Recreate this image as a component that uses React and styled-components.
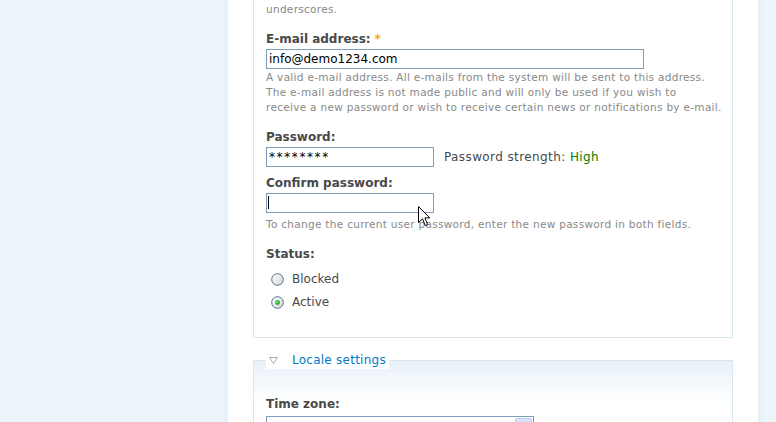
import React from 'react';
import styled, { createGlobalStyle } from 'styled-components';

const GlobalStyle = createGlobalStyle`
  html, body {
    margin: 0;
    padding: 0;
    height: 100%;
  }
  body {
    background: #edf5fa;
    font: 12px/17px "DejaVu Sans", Verdana, sans-serif;
    color: #494949;
    overflow: hidden;
  }
`;

const Page = styled.div`
  position: relative;
  display: flex;
  height: 422px;
  overflow: hidden;
`;

const Gutter = styled.div`
  flex: ${(p) => (p.$side === 'left' ? '0 0 228px' : '1 1 auto')};
  background: ${(p) =>
    p.$side === 'left'
      ? 'linear-gradient(to right, #edf5fa 0, #edf5fa 221px, #e3eef6 228px)'
      : 'linear-gradient(to right, #e3eef6 0, #edf5fa 6px)'};
`;

const Content = styled.main`
  flex: 0 0 530px;
  width: 530px;
  min-width: 0;
  box-sizing: border-box;
  padding: 0 25px;
  background: #fff;
`;

const Fieldset = styled.fieldset`
  box-sizing: border-box;
  width: 480px;
  min-width: 0;
  margin: ${(p) => (p.$cut ? '-30px 0 0' : '14px 0 0')};
  padding: ${(p) => (p.$cut ? '31px 12px 23px' : '27px 12px 20px')};
  border: 1px solid #d8e6ef;
  background: ${(p) => (p.$cut ? '#fff' : 'linear-gradient(#e8f1f9, #fff 42px)')};
`;

const Legend = styled.legend`
  display: flex;
  align-items: center;
  gap: 14px;
  padding: 0 3px 0 3px;
  background: #fff;
  line-height: 17px;
`;

const LegendLink = styled.a`
  color: #027ac6;
  text-decoration: none;
  letter-spacing: 0.25px;
  cursor: pointer;
`;

const Item = styled.div`
  margin-top: ${(p) => p.$gap ?? 14}px;
`;

const Label = styled.label`
  display: block;
  font-weight: bold;
  line-height: 17px;
`;

const Required = styled.span`
  color: #f7a800;
  margin-left: 4px;
`;

const Description = styled.div`
  margin-top: ${(p) => p.$gap ?? 0}px;
  font-size: 10.5px;
  letter-spacing: 0.3px;
  line-height: 15px;
  white-space: nowrap;
  color: #898989;
`;

const FieldRow = styled.div`
  display: flex;
  align-items: center;
  gap: 10px;
  margin-top: 1px;
`;

const InputWrap = styled.div`
  position: relative;
  margin-top: 1px;
  width: ${(p) => p.$width}px;
`;

const TextInput = styled.input`
  display: block;
  box-sizing: border-box;
  width: ${(p) => p.$width}px;
  height: 20px;
  margin: ${(p) => (p.$flush ? '0' : '1px 0 0')};
  padding: 0 2px;
  border: 1px solid #7f9db9;
  background: #fff;
  font: 12px/18px "DejaVu Sans", Verdana, sans-serif;
  letter-spacing: ${(p) => (p.$masked ? '1.6px' : '0')};
  color: #000;
  outline: none;
`;

const Caret = styled.span`
  position: absolute;
  left: 2px;
  top: 3px;
  width: 1px;
  height: 13px;
  background: #000;
`;

const Strength = styled.span`
  color: #494949;
  letter-spacing: 0.4px;
`;

const StrengthLevel = styled.span`
  color: #008000;
`;

const RadioList = styled.div`
  margin-top: 5px;
`;

const RadioRow = styled.label`
  display: flex;
  align-items: center;
  gap: 8px;
  height: 23px;
  padding-left: 5px;
`;

const SelectBox = styled.div`
  display: flex;
  justify-content: flex-end;
  box-sizing: border-box;
  width: 268px;
  height: 20px;
  margin-top: 3px;
  padding: 1px;
  border: 1px solid #7f9db9;
  background: #fff;
`;

const SelectButton = styled.span`
  flex: 0 0 15px;
  border-radius: 2px;
  border: 1px solid #b9cbf3;
  background: linear-gradient(#dbe6fd, #bccff9);
`;

const Pointer = styled.svg`
  position: absolute;
  left: 418px;
  top: 206px;
  pointer-events: none;
`;

function Radio({ checked }) {
  return (
    <svg width="13" height="13" viewBox="0 0 13 13">
      <defs>
        <linearGradient id="radioFill" x1="0" y1="0" x2="1" y2="1">
          <stop offset="0" stopColor="#ffffff" />
          <stop offset="1" stopColor="#d4d4cc" />
        </linearGradient>
        <radialGradient id="radioDot" cx="0.4" cy="0.4" r="0.6">
          <stop offset="0" stopColor="#7be07b" />
          <stop offset="1" stopColor="#1c9a1c" />
        </radialGradient>
      </defs>
      <circle cx="6.5" cy="6.5" r="5.8" fill="url(#radioFill)" stroke="#4d6f93" strokeWidth="1" />
      {checked && <circle cx="6.5" cy="6.5" r="2.4" fill="url(#radioDot)" />}
    </svg>
  );
}

function CollapseArrow() {
  return (
    <svg width="9" height="7" viewBox="0 0 9 7">
      <polygon points="0.5,0.5 8.5,0.5 4.5,6.5" fill="#fff" stroke="#a7a7a7" strokeWidth="1" />
    </svg>
  );
}

export default function App() {
  return (
    <>
      <GlobalStyle />
      <Page>
        <Gutter $side="left" />
        <Content>
          <Fieldset $cut>
            <Description>underscores.</Description>

            <Item>
              <Label htmlFor="mail">
                E-mail address:<Required>*</Required>
              </Label>
              <TextInput id="mail" $width={378} defaultValue="info@demo1234.com" readOnly />
              <Description $gap={1}>
                A valid e-mail address. All e-mails from the system will be sent to this address.
                <br />
                The e-mail address is not made public and will only be used if you wish to
                <br />
                receive a new password or wish to receive certain news or notifications by e-mail.
              </Description>
            </Item>

            <Item>
              <Label htmlFor="pass">Password:</Label>
              <FieldRow>
                <TextInput id="pass" $width={168} $flush $masked defaultValue="********" readOnly />
                <Strength>
                  Password strength: <StrengthLevel>High</StrengthLevel>
                </Strength>
              </FieldRow>
              <Item $gap={8}>
                <Label htmlFor="pass2">Confirm password:</Label>
                <InputWrap $width={168}>
                  <TextInput id="pass2" $width={168} $flush defaultValue="" readOnly />
                  <Caret />
                </InputWrap>
              </Item>
              <Description $gap={4}>
                To change the current user password, enter the new password in both fields.
              </Description>
            </Item>

            <Item>
              <Label>Status:</Label>
              <RadioList>
                <RadioRow>
                  <Radio />
                  Blocked
                </RadioRow>
                <RadioRow>
                  <Radio checked />
                  Active
                </RadioRow>
              </RadioList>
            </Item>
          </Fieldset>

          <Fieldset>
            <Legend>
              <CollapseArrow />
              <LegendLink>Locale settings</LegendLink>
            </Legend>
            <Label>Time zone:</Label>
            <SelectBox>
              <SelectButton />
            </SelectBox>
          </Fieldset>
        </Content>
        <Gutter $side="right" />

        <Pointer width="13" height="21" viewBox="0 0 13 21">
          <path
            d="M0.5 0.5 L0.5 16.5 L4.5 12.8 L7.2 19.5 L9.6 18.5 L6.9 11.9 L11.8 11.9 Z"
            fill="#fff"
            stroke="#000"
            strokeWidth="1"
            strokeLinejoin="miter"
          />
        </Pointer>
      </Page>
    </>
  );
}
